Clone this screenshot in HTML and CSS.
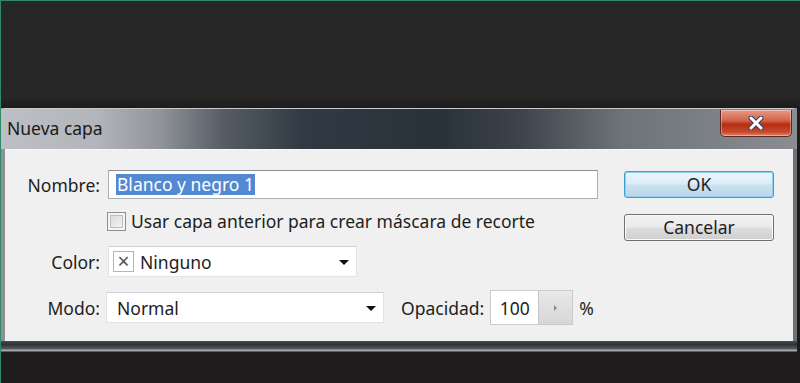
FILE: index.html
```html
<!DOCTYPE html>
<html lang="es">

<head>
  <meta charset="UTF-8">
  <title>Nueva capa</title>
  <link rel="stylesheet" href="styles.css">
</head>

<body>
  <div class="screen">
    <div class="top-space"></div>

    <div class="dialog">
      <div class="titlebar">
        <span class="title">Nueva capa</span>
        <div class="close-btn">
          <svg width="20" height="14" viewBox="0 0 20 14">
            <path d="M5 2 L15 12 M15 2 L5 12" stroke="#3a3f66" stroke-width="5" stroke-linecap="round"/>
            <path d="M5 2 L15 12 M15 2 L5 12" stroke="#fff" stroke-width="3" stroke-linecap="round"/>
          </svg>
        </div>
      </div>

      <div class="content">
        <div class="form">
          <div class="row row-name">
            <label class="label">Nombre:</label>
            <div class="text-input name-input"><span class="selected">Blanco y negro 1</span></div>
          </div>

          <div class="row row-check">
            <span class="label"></span>
            <span class="checkbox"></span>
            <span class="check-text">Usar capa anterior para crear máscara de recorte</span>
          </div>

          <div class="row row-color">
            <label class="label">Color:</label>
            <div class="select color-select">
              <span class="swatch">×</span>
              <span class="select-text">Ninguno</span>
              <span class="arrow"></span>
            </div>
          </div>

          <div class="row row-mode">
            <label class="label">Modo:</label>
            <div class="select mode-select">
              <span class="select-text">Normal</span>
              <span class="arrow"></span>
            </div>
            <label class="opacity-label">Opacidad:</label>
            <div class="opacity-box">
              <span class="opacity-value">100</span>
              <span class="spinner"><span class="tri"></span></span>
            </div>
            <span class="percent">%</span>
          </div>
        </div>

        <div class="buttons">
          <button class="btn btn-default">OK</button>
          <button class="btn">Cancelar</button>
        </div>
      </div>

      <div class="frame-bottom"></div>
    </div>
  </div>
</body>

</html>
```

FILE: styles.css
```css
* {
  box-sizing: border-box;
}

body {
  margin: 0;
  padding: 0;
  background-color: #1f1c1d;
  font-family: "Noto Sans", "Open Sans", sans-serif;
}

.screen {
  width: 800px;
  height: 383px;
  background-color: #1f1c1d;
  box-shadow: inset 1px 1px 0 #2f8a66;
  overflow: hidden;
}

.top-space {
  height: 108px;
  background: linear-gradient(#262626 0%, #272727 90%, #1c1c1c 100%);
  border-top: 1px solid #2f8a66;
  border-left: 1px solid #2f8a66;
}

.dialog {
  width: 796px;
  margin-left: 1px;
  border-top: 1px solid #c9cbcd;
  border-left: 4px solid #8d9196;
  border-right: 4px solid #6d7176;
}

/* title bar with the aero-like gradient */
.titlebar {
  position: relative;
  height: 40px;
  margin: 0 -4px;
  padding-left: 6px;
  display: flex;
  align-items: center;
  background: linear-gradient(90deg, #bcbfc3 0%, #b2b5b9 12%, #90949a 20%, #555c64 28%, #313a44 38%, #29313a 55%, #3c434a 65%, #6e7378 78%, #8a8e92 100%);
}

.title {
  font-size: 17.5px;
  color: #1a1a1a;
  margin-top: -2px;
}

.close-btn {
  position: absolute;
  right: 5px;
  top: 1px;
  width: 72px;
  height: 27px;
  border: 1px solid #5a2a24;
  border-top: none;
  border-radius: 0 0 5px 5px;
  background: linear-gradient(#e89a86 0%, #d2654b 40%, #b72d12 55%, #c64a2e 85%, #e0886e 100%);
  box-shadow: inset 0 0 0 1px rgba(255, 255, 255, 0.35);
  display: flex;
  justify-content: center;
  align-items: center;
}

.content {
  height: 192px;
  background-color: #f0f0f0;
  display: flex;
  border-top: 1px solid #f8f8f8;
}

.form {
  width: 619px;
  font-size: 17.5px;
  color: #1e1e1e;
}

.row {
  display: flex;
  align-items: center;
}

.label {
  width: 95px;
  text-align: right;
  margin-right: 8px;
}

.row-name {
  margin-top: 20px;
  height: 29px;
}

.text-input {
  height: 29px;
  background-color: #fff;
  border: 1px solid #abadb3;
  border-top-color: #8e9297;
  display: flex;
  align-items: center;
  padding-left: 7px;
}

.name-input {
  width: 490px;
}

.selected {
  background-color: #5289d2;
  color: #fff;
  line-height: 21px;
  padding: 0 1px;
}

.row-check {
  margin-top: 12px;
  height: 20px;
}

.row-check .label {
  margin-right: 7px;
}

.checkbox {
  width: 19px;
  height: 19px;
  border: 1px solid #8f8f8f;
  background: linear-gradient(135deg, #d8d8d8, #f6f6f6);
  box-shadow: inset 0 0 0 2px #f4f4f4, inset 0 0 0 3px #bfbfbf;
  margin-right: 5px;
}

.row-color {
  margin-top: 15px;
  height: 31px;
}

.select {
  position: relative;
  height: 31px;
  background-color: #fff;
  border: 1px solid #e2e3e5;
  border-top-color: #cfd1d4;
  display: flex;
  align-items: center;
}

.color-select {
  width: 249px;
  padding-left: 4px;
}

.swatch {
  width: 21px;
  height: 21px;
  border: 1px solid #b5b5b5;
  display: flex;
  justify-content: center;
  align-items: center;
  font-size: 21px;
  color: #555;
  line-height: 1;
  margin-right: 6px;
}

.arrow {
  position: absolute;
  right: 7px;
  top: 13px;
  width: 0;
  height: 0;
  border-left: 5px solid transparent;
  border-right: 5px solid transparent;
  border-top: 5px solid #111;
}

.row-mode {
  margin-top: 15px;
  height: 31px;
}

.row-mode .label {
  margin-right: 6px;
}

.mode-select {
  width: 278px;
  padding-left: 10px;
}

.opacity-label {
  margin-left: 17px;
  margin-right: 6px;
}

.opacity-box {
  height: 35px;
  width: 83px;
  display: flex;
  border: 1px solid #c9cbce;
  background-color: #fff;
}

.opacity-value {
  width: 47px;
  display: flex;
  align-items: center;
  justify-content: center;
}

.spinner {
  flex: 1;
  border-left: 1px solid #c4c4c4;
  background: linear-gradient(#e9e9e9, #d6d6d6);
  display: flex;
  justify-content: center;
  align-items: center;
}

.tri {
  width: 0;
  height: 0;
  border-top: 3px solid transparent;
  border-bottom: 3px solid transparent;
  border-left: 3px solid #8a8a8a;
}

.percent {
  margin-left: 6px;
}

.buttons {
  display: flex;
  flex-direction: column;
  gap: 16px;
  padding-top: 21px;
}

.btn {
  width: 150px;
  height: 27px;
  font-family: "Noto Sans", "Open Sans", sans-serif;
  font-size: 17.5px;
  line-height: 1;
  color: #1e1e1e;
  border: 1px solid #707070;
  border-radius: 3px;
  background: linear-gradient(#f2f2f2 0%, #ebebeb 48%, #dddddd 52%, #cfcfcf 100%);
  box-shadow: inset 0 0 0 1px #fbfbfb;
  padding: 0;
}

.btn-default {
  border-color: #3c9fd0;
  background: linear-gradient(#eaf5fb 0%, #dcedf7 48%, #c9e2f0 52%, #b9d8ea 100%);
  box-shadow: inset 0 0 0 1px #8fd0ee;
}

.frame-bottom {
  height: 11px;
  margin: 0 -4px;
  background: linear-gradient(#4a4e52 0%, #2e3236 30%, #565a5e 70%, #aeb2b4 85%, #3a3c3e 100%);
}
```
